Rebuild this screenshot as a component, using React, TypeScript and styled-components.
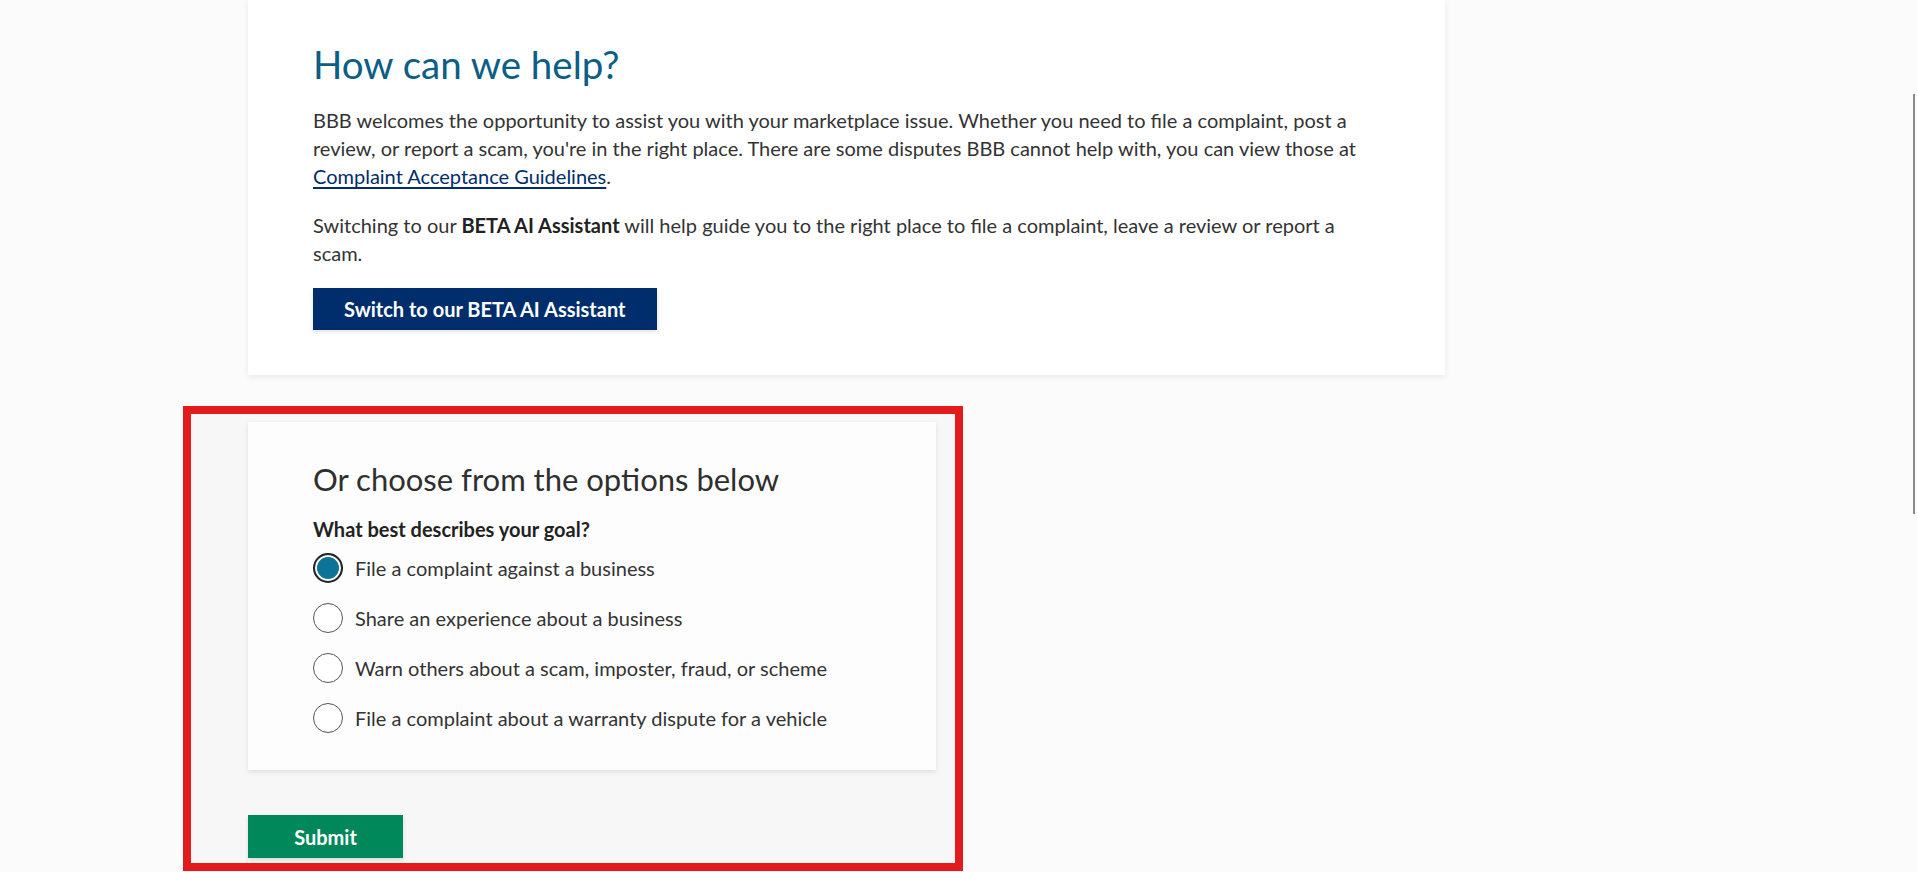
import React from "react";
import styled, { createGlobalStyle } from "styled-components";

const GlobalStyle = createGlobalStyle`
  html, body {
    margin: 0;
    padding: 0;
    background-color: #fbfbfb;
    overflow: hidden;
  }
  body {
    font-family: Lato, "Open Sans", Arial, sans-serif;
    color: #333333;
  }
`;

const options = [
  "File a complaint against a business",
  "Share an experience about a business",
  "Warn others about a scam, imposter, fraud, or scheme",
  "File a complaint about a warranty dispute for a vehicle",
];

const App: React.FC = () => {
  return (
    <Page>
      <GlobalStyle />
      <HelpCard>
        <Title>How can we help?</Title>
        <Text>
          BBB welcomes the opportunity to assist you with your marketplace
          issue. Whether you need to file a complaint, post a review, or report
          a scam, you're in the right place. There are some disputes BBB cannot
          help with, you can view those at{" "}
          <Link href="#">Complaint Acceptance Guidelines</Link>.
        </Text>
        <Text>
          Switching to our <b>BETA AI Assistant</b> will help guide you to the
          right place to file a complaint, leave a review or report a scam.
        </Text>
        <NavyButton>Switch to our BETA AI Assistant</NavyButton>
      </HelpCard>

      <Highlight>
        <OptionsCard>
          <SubTitle>Or choose from the options below</SubTitle>
          <Question>What best describes your goal?</Question>
          <List>
            {options.map((o, i) => (
              <Option key={o}>
                <Radio $checked={i === 0} />
                <span>{o}</span>
              </Option>
            ))}
          </List>
        </OptionsCard>
        <GreenButton>Submit</GreenButton>
      </Highlight>

      <ScrollThumb />
    </Page>
  );
};

export default App;

const Page = styled.div`
  width: 100%;
  height: 872px;
  display: flex;
  flex-direction: column;
  align-items: flex-start;
  padding-left: 183px;
  box-sizing: border-box;
`;

const HelpCard = styled.div`
  width: 1197px;
  margin-left: 65px;
  box-sizing: border-box;
  padding: 40px 65px 45px;
  background-color: #ffffff;
  box-shadow: rgba(0, 0, 0, 0.08) 0px 2px 6px;
  display: flex;
  flex-direction: column;
  align-items: flex-start;
`;

const Title = styled.h1`
  margin: 0 0 18px;
  font-size: 38.5px;
  line-height: 48px;
  font-weight: 400;
  color: #0b5e85;
`;

const Text = styled.p`
  margin: 0 0 21px;
  max-width: 1060px;
  font-size: 20px;
  line-height: 28px;
  color: #333333;

  b {
    font-weight: 700;
    color: #222222;
  }
`;

const Link = styled.a`
  color: #002d6b;
  text-decoration: underline;
  text-underline-offset: 3px;
`;

const NavyButton = styled.button`
  height: 42px;
  padding: 0 31px;
  border: none;
  background-color: #002d6b;
  color: #ffffff;
  font-family: Lato, Arial, sans-serif;
  font-size: 20px;
  font-weight: 700;
  box-shadow: rgba(0, 0, 0, 0.12) 0px 2px 4px;
  cursor: pointer;
`;

const Highlight = styled.div`
  margin-top: 31px;
  width: 780px;
  box-sizing: border-box;
  border: 8px solid #e31b1c;
  background-color: #f7f7f7;
  padding: 8px 0 5px 57px;
  display: flex;
  flex-direction: column;
  align-items: flex-start;
  gap: 45px;
`;

const OptionsCard = styled.div`
  width: 688px;
  box-sizing: border-box;
  padding: 38px 65px 37px;
  background-color: #fdfdfd;
  box-shadow: rgba(0, 0, 0, 0.1) 0px 2px 5px;
`;

const SubTitle = styled.h2`
  margin: 0 0 18px;
  font-size: 31px;
  line-height: 38px;
  font-weight: 400;
  color: #2f2f2f;
`;

const Question = styled.div`
  font-size: 20px;
  line-height: 26px;
  font-weight: 700;
  color: #222222;
  margin-bottom: 11px;
`;

const List = styled.div`
  display: flex;
  flex-direction: column;
  gap: 20px;
`;

const Option = styled.label`
  display: flex;
  align-items: center;
  gap: 12px;
  height: 30px;
  font-size: 20px;
  color: #333333;
  cursor: pointer;
`;

const Radio = styled.span<{ $checked: boolean }>`
  width: 30px;
  height: 30px;
  box-sizing: border-box;
  border-radius: 50%;
  flex: none;
  background-color: #ffffff;
  border: ${(p) => (p.$checked ? "2px solid #222" : "1.5px solid #555")};
  box-shadow: ${(p) =>
    p.$checked ? "inset 0 0 0 2px #ffffff, inset 0 0 0 13px #0d7399" : "none"};
`;

const GreenButton = styled.button`
  width: 155px;
  height: 43px;
  border: none;
  background-color: #00875a;
  color: #ffffff;
  font-family: Lato, Arial, sans-serif;
  font-size: 20px;
  font-weight: 700;
  box-shadow: rgba(0, 0, 0, 0.12) 0px 2px 4px;
  cursor: pointer;
`;

const ScrollThumb = styled.div`
  position: fixed;
  right: 2px;
  top: 94px;
  width: 2px;
  height: 420px;
  background-color: #8a8a8a;
`;
